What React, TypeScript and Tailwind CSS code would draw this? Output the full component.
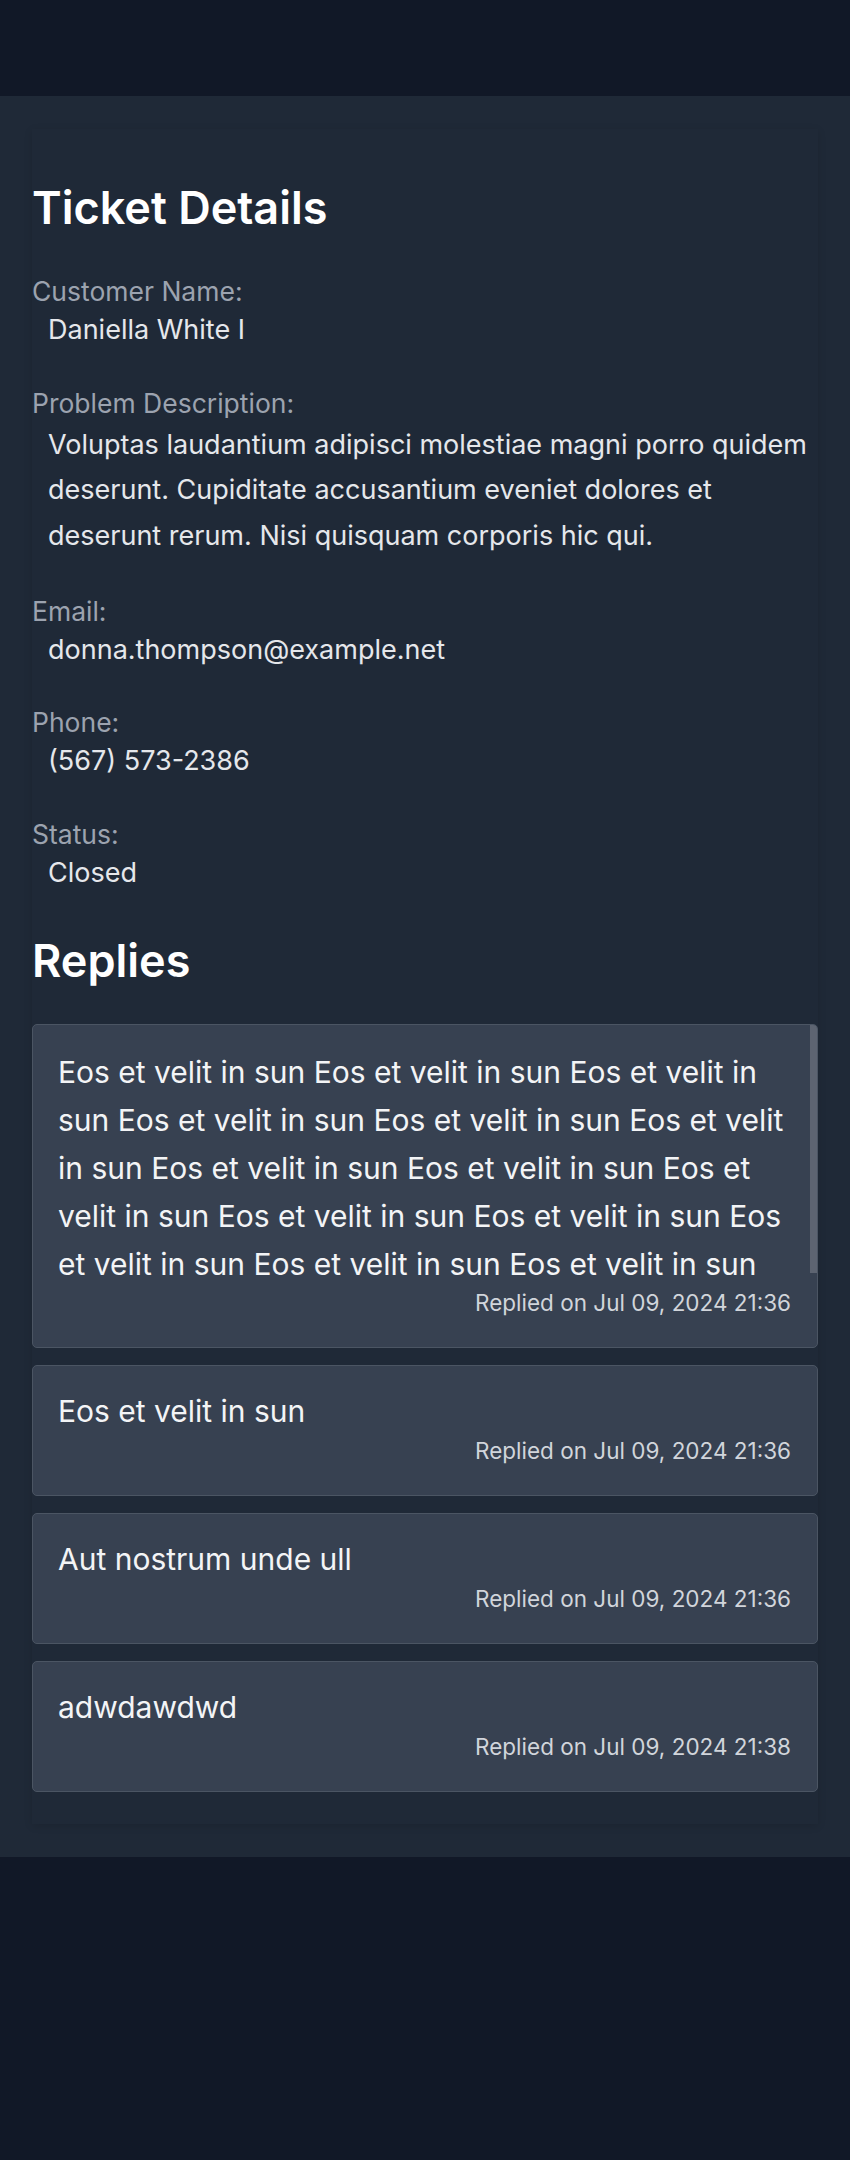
const fields = [
  { label: "Customer Name:", value: "Daniella White I" },
  {
    label: "Problem Description:",
    value:
      "Voluptas laudantium adipisci molestiae magni porro quidem deserunt. Cupiditate accusantium eveniet dolores et deserunt rerum. Nisi quisquam corporis hic qui.",
    multi: true,
  },
  { label: "Email:", value: "donna.thompson@example.net" },
  { label: "Phone:", value: "(567) 573-2386" },
  { label: "Status:", value: "Closed" },
];

const longReply = Array(14).fill("Eos et velit in sun").join(" ");

const replies = [
  { body: longReply, date: "Jul 09, 2024 21:36", scroll: true },
  { body: "Eos et velit in sun", date: "Jul 09, 2024 21:36" },
  { body: "Aut nostrum unde ull", date: "Jul 09, 2024 21:36" },
  { body: "adwdawdwd", date: "Jul 09, 2024 21:38" },
];

function Reply({ body, date, scroll }: { body: string; date: string; scroll?: boolean }) {
  return (
    <div className="relative rounded-[5px] border border-[#4b5563] bg-[#374151]">
      {scroll ? (
        <>
          <div className="max-h-[262px] overflow-hidden pl-[25px] pr-[15px] pt-[23px] pb-[14px]">
            <p className="text-[30px] leading-[48px] text-[#f3f4f6]">{body}</p>
          </div>
          {/* scrollbar thumb */}
          <div className="absolute top-0 right-0 h-[248px] w-[7px] rounded-tr-[4px] bg-[#5d6471]" />
        </>
      ) : (
        <p className="px-[25px] pt-[21px] text-[30px] leading-[48px] text-[#f3f4f6]">{body}</p>
      )}
      <p className="px-[26px] pb-[28px] text-right text-[22.5px] leading-[31.6px] text-[#d1d5db]">
        Replied on {date}
      </p>
    </div>
  );
}

export default function App() {
  return (
    <div className="min-h-[2160px] bg-[#111827] font-['Inter',sans-serif]">
      <div className="h-[96px] bg-[#111827]" />
      <section className="bg-[#1f2937] px-[32px] py-[33px]">
        <div className="bg-[#1f2937] pt-[50.5px] pb-[32px] shadow-[0_2px_8px_rgba(0,0,0,0.12)]">
          <h2 className="mb-[36.5px] text-[45px] font-semibold leading-[56px] text-white">Ticket Details</h2>
          <div className="flex flex-col gap-[33.3px]">
            {fields.map((f) => (
              <div key={f.label}>
                <p className="text-[26.5px] leading-[38.2px] text-[#9ca3af]">{f.label}</p>
                <p
                  className={
                    f.multi
                      ? "pl-[16px] text-[27px] leading-[45.5px] text-[#e5e7eb]"
                      : "pl-[16px] text-[27px] leading-[40px] text-[#e5e7eb]"
                  }
                >
                  {f.value}
                </p>
              </div>
            ))}
          </div>
          <h2 className="mt-[40.3px] mb-[35.2px] text-[45px] font-semibold leading-[56px] text-white">Replies</h2>
          <div className="flex flex-col gap-[17.4px]">
            {replies.map((r, i) => (
              <Reply key={i} {...r} />
            ))}
          </div>
        </div>
      </section>
    </div>
  );
}
